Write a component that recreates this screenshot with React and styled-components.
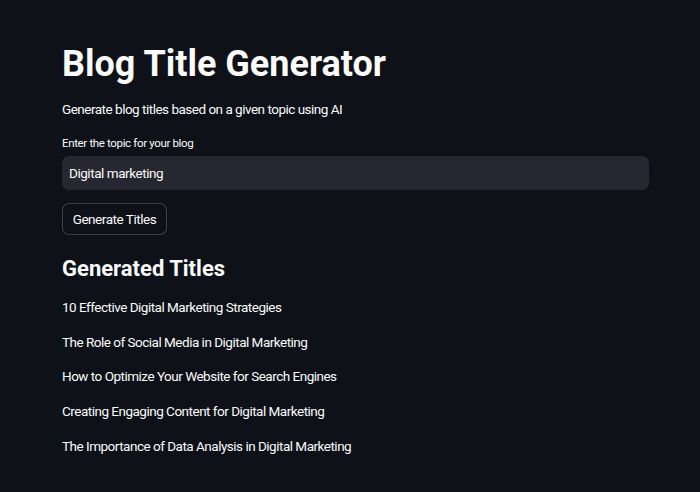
import React from "react";
import styled, { createGlobalStyle } from "styled-components";

const GlobalStyle = createGlobalStyle`
  body {
    margin: 0;
    background-color: #0e1117;
    color: #fafafa;
    font-family: Roboto, "Noto Sans", sans-serif;
  }
`;

const Main = styled.div`
  width: 587px;
  padding: 41px 0 0 62px;
`;

const Title = styled.h1`
  margin: 0;
  font-size: 36px;
  font-weight: 700;
  line-height: 46px;
`;

const BodyText = styled.div`
  font-size: 13.5px;
  line-height: 22px;
  letter-spacing: -0.5px;
`;

const Subtitle = styled(BodyText)`
  margin-top: 11px;
`;

const Label = styled.div`
  margin-top: 15px;
  font-size: 11.5px;
  line-height: 16px;
  letter-spacing: -0.35px;
`;

const TopicInput = styled.input`
  box-sizing: border-box;
  display: block;
  width: 587px;
  height: 34px;
  margin-top: 5px;
  padding: 0 7px;
  border: none;
  border-radius: 7px;
  background-color: #262730;
  color: #fafafa;
  font-family: inherit;
  font-size: 13.5px;
  letter-spacing: -0.45px;
  outline: none;
`;

const GenerateButton = styled.button`
  display: block;
  width: 105px;
  height: 32px;
  margin-top: 13px;
  padding: 0;
  border: 1px solid rgba(250, 250, 250, 0.2);
  border-radius: 7px;
  background-color: #0e1117;
  color: #fafafa;
  font-family: inherit;
  font-size: 13.5px;
  letter-spacing: -0.45px;
`;

const SectionTitle = styled.h2`
  margin: 20px 0 0;
  font-size: 22px;
  font-weight: 700;
  line-height: 28px;
`;

const TitleList = styled.div`
  display: flex;
  flex-direction: column;
  gap: 12.7px;
  margin-top: 13px;
`;

const titles = [
  "10 Effective Digital Marketing Strategies",
  "The Role of Social Media in Digital Marketing",
  "How to Optimize Your Website for Search Engines",
  "Creating Engaging Content for Digital Marketing",
  "The Importance of Data Analysis in Digital Marketing",
];

export default function App() {
  return (
    <>
      <GlobalStyle />
      <Main>
        <Title>Blog Title Generator</Title>
        <Subtitle>Generate blog titles based on a given topic using AI</Subtitle>
        <Label>Enter the topic for your blog</Label>
        <TopicInput defaultValue="Digital marketing" />
        <GenerateButton>Generate Titles</GenerateButton>
        <SectionTitle>Generated Titles</SectionTitle>
        <TitleList>
          {titles.map((t) => (
            <BodyText key={t}>{t}</BodyText>
          ))}
        </TitleList>
      </Main>
    </>
  );
}
